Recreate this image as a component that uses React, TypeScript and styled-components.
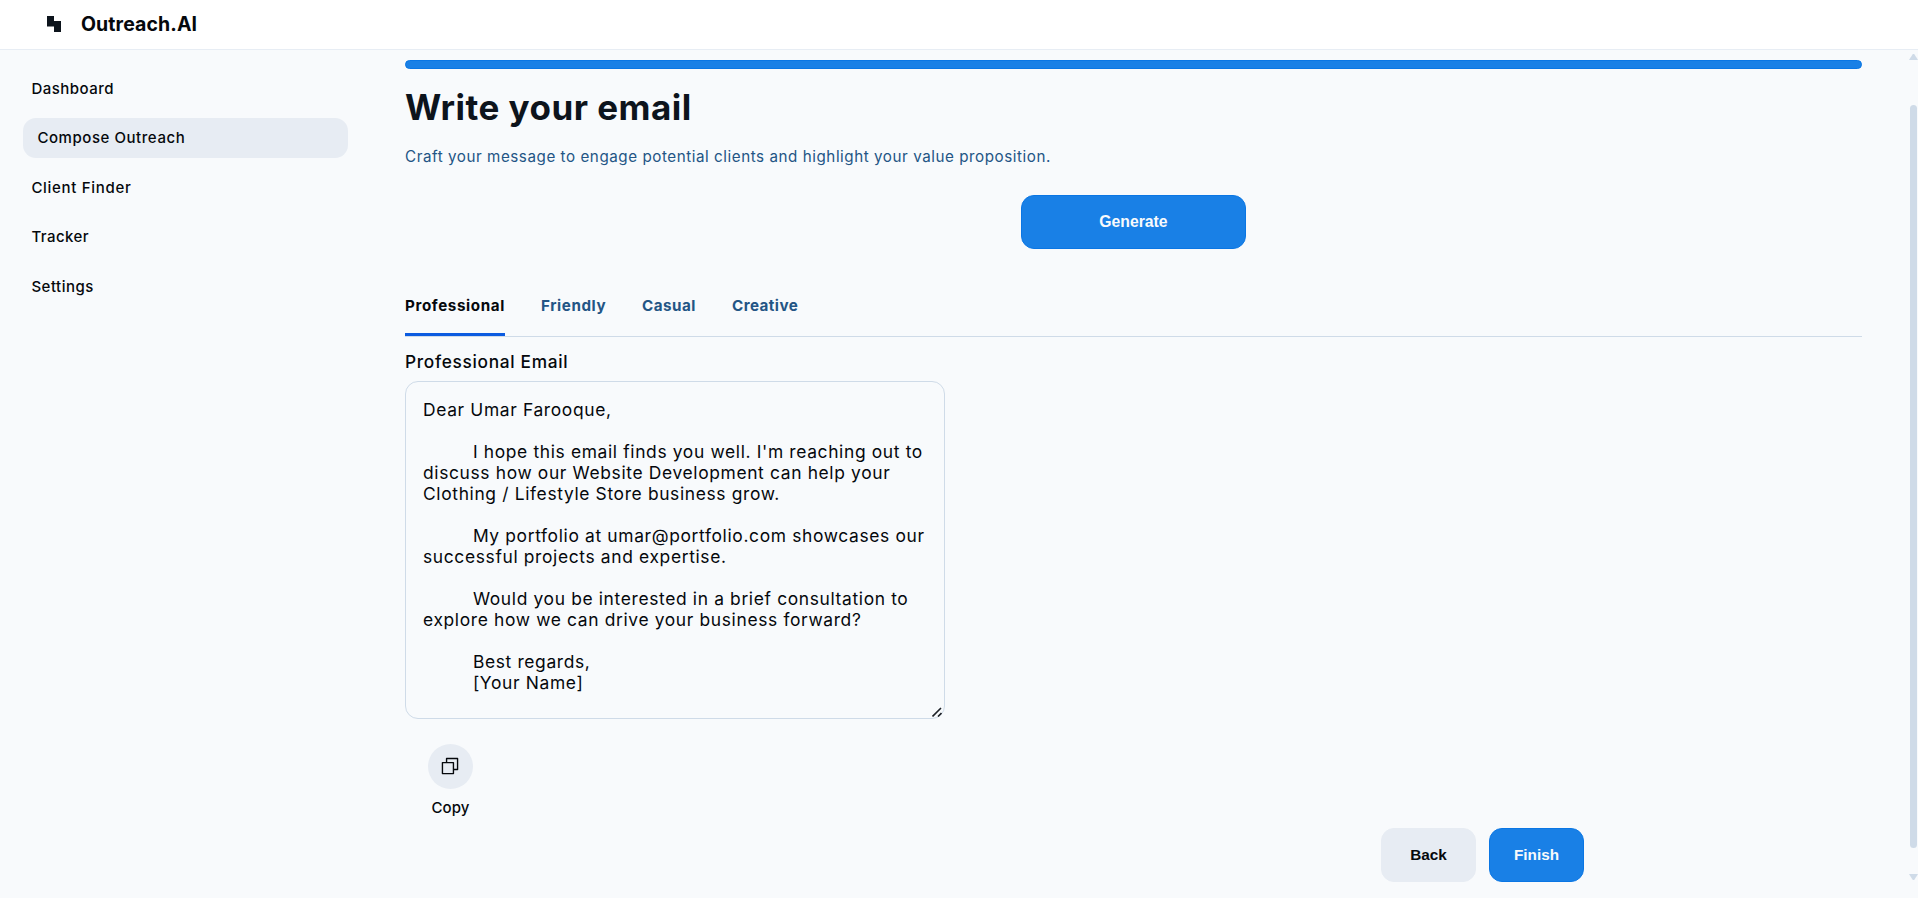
import React, { useState } from "react";
import styled, { createGlobalStyle } from "styled-components";

const Global = createGlobalStyle`
  * { box-sizing: border-box; }
  body { margin: 0; background: #f8fafc; overflow: hidden; }
  button { cursor: pointer; }
`;

const sans = `Inter, "Noto Sans", sans-serif`;

const Shell = styled.div`
  height: 898px;
  display: flex;
  flex-direction: column;
  font-family: ${sans};
  color: #05080c;
`;

const Header = styled.header`
  height: 50px;
  flex: none;
  display: flex;
  align-items: center;
  gap: 20px;
  padding: 0 47px 2px;
  background: #fff;
  border-bottom: 1px solid #e7edf4;
`;

const Brand = styled.h2`
  margin: 0;
  font-size: 19.5px;
  font-weight: 700;
  line-height: 24px;
  letter-spacing: 0.1px;
`;

const Body = styled.div`
  flex: 1;
  min-height: 0;
  display: flex;
`;

const Sidebar = styled.nav`
  width: 348px;
  flex: none;
  padding: 18.4px 0 0 23.4px;
  display: flex;
  flex-direction: column;
  gap: 9.5px;
`;

const NavItem = styled.a<{ $active?: boolean; $spacing: number }>`
  height: 40px;
  display: flex;
  align-items: center;
  padding: 0 ${(p) => (p.$active ? 14 : 8)}px;
  border-radius: 13px;
  background: ${(p) => (p.$active ? "#e7ecf3" : "transparent")};
  font-size: 15px;
  font-weight: 500;
  letter-spacing: ${(p) => p.$spacing}px;
`;

const Main = styled.main`
  flex: 1;
  min-width: 0;
  padding: 10px 47px 0 57px;
  display: flex;
  flex-direction: column;
`;

const Progress = styled.div`
  height: 9px;
  flex: none;
  border-radius: 5px;
  background: #1980e6;
  border: 1px solid #0a76e4;
`;

const Title = styled.h1`
  margin: 17px 0 0;
  font-size: 35px;
  line-height: 42px;
  font-weight: 700;
  letter-spacing: 0.48px;
  color: #0d141c;
`;

const Subtitle = styled.p`
  margin: 17px 0 0;
  font-size: 15.2px;
  line-height: 24px;
  letter-spacing: 0.55px;
  color: #235585;
`;

const Button = styled.button<{ $wide?: boolean; $primary?: boolean }>`
  width: ${(p) => (p.$wide ? 225 : 95)}px;
  height: 54px;
  padding: 0;
  border-radius: 13px;
  border: 1px solid ${(p) => (p.$primary ? "#0a76e4" : "#e7ecf3")};
  background: ${(p) => (p.$primary ? "#1980e6" : "#e7ecf3")};
  color: ${(p) => (p.$primary ? "#f8fafc" : "#05080c")};
  font: 700 ${(p) => (p.$wide ? 15.75 : 15.3)}px "Liberation Sans", Arial, sans-serif;
`;

const GenerateRow = styled.div`
  margin-top: 26px;
  display: flex;
  justify-content: center;
`;

const Tabs = styled.div`
  margin-top: 38px;
  height: 50px;
  flex: none;
  display: flex;
  gap: 36px;
  border-bottom: 1px solid #cfdbe8;
`;

const Tab = styled.a<{ $active: boolean; $width: number; $spacing: number }>`
  width: ${(p) => p.$width}px;
  padding-top: 7px;
  line-height: 24px;
  font-size: 15.2px;
  font-weight: 700;
  white-space: nowrap;
  letter-spacing: ${(p) => p.$spacing}px;
  color: ${(p) => (p.$active ? "#05080c" : "#235585")};
  border-bottom: 3px solid ${(p) => (p.$active ? "#0b5be0" : "transparent")};
`;

const Label = styled.label`
  margin-top: 13px;
  font-size: 17.3px;
  line-height: 24px;
  font-weight: 500;
  letter-spacing: 0.68px;
`;

const MessageBox = styled.div`
  position: relative;
  width: 540px;
  height: 338px;
  flex: none;
  margin-top: 7px;
`;

const Message = styled.textarea`
  display: block;
  width: 100%;
  height: 100%;
  margin: 0;
  padding: 17px 12px 0 17px;
  border: 1px solid #cfdbe8;
  border-radius: 13px;
  background: transparent;
  color: #05080c;
  font-family: ${sans};
  font-size: 17.4px;
  line-height: 21px;
  letter-spacing: 0.65px;
  outline: none;
  resize: none;
  overflow: hidden;
`;

const Grip = styled.svg`
  position: absolute;
  right: 3px;
  bottom: 2px;
  pointer-events: none;
`;

const CopyAction = styled.div`
  margin: 25px 0 0 23px;
  width: 45px;
  display: flex;
  flex-direction: column;
  align-items: center;
  gap: 7px;
  font-size: 15px;
  line-height: 24px;
  font-weight: 500;
  letter-spacing: 0.1px;
`;

const CopyCircle = styled.span`
  width: 45px;
  height: 45px;
  padding: 11px;
  border-radius: 50%;
  background: #e7ecf3;

  svg {
    display: block;
  }
`;

const Footer = styled.footer`
  margin-top: 8px;
  display: flex;
  justify-content: flex-end;
  gap: 13px;
  padding-right: 278px;
`;

const Scrollbar = styled.div`
  width: 9px;
  flex: none;
  display: flex;
  flex-direction: column;
  align-items: center;
  justify-content: space-between;
  padding: 4px 0 18px;
`;

const Arrow = styled.svg`
  display: block;
  flex: none;
`;

const Thumb = styled.div`
  width: 7px;
  height: 743px;
  margin-top: 19px;
  border-radius: 4px;
  background: #cfdbe8;
`;

const nav = [
  { label: "Dashboard", spacing: 0.5 },
  { label: "Compose Outreach", spacing: 0.56, active: true },
  { label: "Client Finder", spacing: 0.7 },
  { label: "Tracker", spacing: 0.45 },
  { label: "Settings", spacing: 0.5 },
];

const tabs = [
  { label: "Professional", width: 100, spacing: 0.62 },
  { label: "Friendly", width: 65, spacing: 0.58 },
  { label: "Casual", width: 54, spacing: 0.5 },
  { label: "Creative", width: 66, spacing: 0.45 },
];

const indent = " ".repeat(9);
const email = [
  "Dear Umar Farooque,",
  "",
  indent + "I hope this email finds you well. I'm reaching out to",
  "discuss how our Website Development can help your",
  "Clothing / Lifestyle Store business grow.",
  "",
  indent + "My portfolio at umar@portfolio.com showcases our",
  "successful projects and expertise.",
  "",
  indent + "Would you be interested in a brief consultation to",
  "explore how we can drive your business forward?",
  "",
  indent + "Best regards,",
  indent + "[Your Name]",
].join("\n");

export default function App() {
  const [tab, setTab] = useState("Professional");
  return (
    <Shell>
      <Global />
      <Header>
        <svg width="14" height="16" viewBox="0 0 14 16">
          <path d="M0 0H7V5H14V16H7V10.5H0Z" fill="#0d141c" />
        </svg>
        <Brand>Outreach.AI</Brand>
      </Header>
      <Body>
        <Sidebar>
          {nav.map((n) => (
            <NavItem key={n.label} $active={n.active} $spacing={n.spacing}>
              {n.label}
            </NavItem>
          ))}
        </Sidebar>
        <Main>
          <Progress />
          <Title>Write your email</Title>
          <Subtitle>
            Craft your message to engage potential clients and highlight your value proposition.
          </Subtitle>
          <GenerateRow>
            <Button $wide $primary>Generate</Button>
          </GenerateRow>
          <Tabs>
            {tabs.map((t) => (
              <Tab
                key={t.label}
                $active={t.label === tab}
                $width={t.width}
                $spacing={t.spacing}
                onClick={() => setTab(t.label)}
              >
                {t.label}
              </Tab>
            ))}
          </Tabs>
          <Label htmlFor="message">Professional Email</Label>
          <MessageBox>
            <Message id="message" defaultValue={email} spellCheck={false} />
            <Grip width="10" height="10" viewBox="0 0 10 10" stroke="#1c2026" strokeWidth="1.6">
              <path d="M0.5 9.5L9 1M6 9.5L9.5 6" />
            </Grip>
          </MessageBox>
          <CopyAction>
            <CopyCircle>
              <svg width="22" height="22" viewBox="0 0 256 256" fill="#05080c">
                <path d="M216,32H88a8,8,0,0,0-8,8V80H40a8,8,0,0,0-8,8V216a8,8,0,0,0,8,8H168a8,8,0,0,0,8-8V176h40a8,8,0,0,0,8-8V40A8,8,0,0,0,216,32ZM160,208H48V96H160Zm48-48H176V88a8,8,0,0,0-8-8H96V48H208Z" />
              </svg>
            </CopyCircle>
            Copy
          </CopyAction>
          <Footer>
            <Button>Back</Button>
            <Button $primary>Finish</Button>
          </Footer>
        </Main>
        <Scrollbar>
          <Arrow width="9" height="6" viewBox="0 0 9 6">
            <path d="M3.8 0H5.2L9 6H0Z" fill="#cfdbe8" />
          </Arrow>
          <Thumb />
          <Arrow width="9" height="6" viewBox="0 0 9 6">
            <path d="M0 0H9L5.2 6H3.8Z" fill="#cfdbe8" />
          </Arrow>
        </Scrollbar>
      </Body>
    </Shell>
  );
}
